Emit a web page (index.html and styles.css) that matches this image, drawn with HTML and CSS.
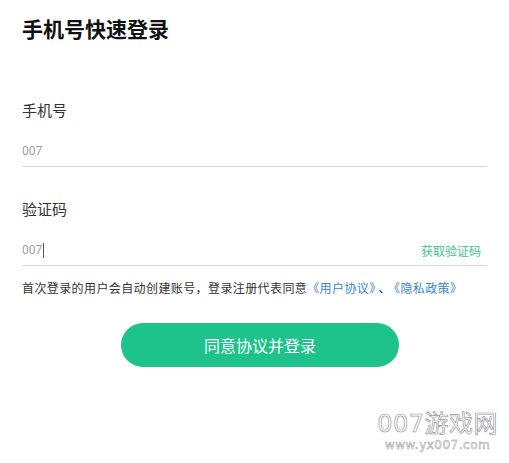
FILE: index.html
```html
<!DOCTYPE html>
<html lang="zh">
<head>
<meta charset="utf-8">
<link rel="stylesheet" href="styles.css">
</head>
<body>
<div class="page">
  <h1 class="title">手机号快速登录</h1>
  <div class="field field-phone">
    <div class="label">手机号</div>
    <div class="input-row"><span class="value">007</span></div>
  </div>
  <div class="field field-code">
    <div class="label">验证码</div>
    <div class="input-row"><span class="value">007<span class="caret"></span></span><span class="get-code">获取验证码</span></div>
  </div>
  <p class="agree">首次登录的用户会自动创建账号，登录注册代表同意<span class="link">《用户协议》</span><span class="sep">、</span><span class="link">《隐私政策》</span></p>
  <div class="btn-wrap"><button class="btn">同意协议并登录</button></div>
  <div class="watermark">
    <div class="wm-big">007游戏网</div>
    <div class="wm-small">www.yx007.com</div>
  </div>
</div>
</body>
</html>
```
FILE: styles.css
```css
html, body { margin: 0; padding: 0; background: #fff; }
body { font-family: "Noto Sans CJK SC", "Noto Sans", sans-serif; color: #222; }
.page { position: relative; width: 509px; height: 463px; padding: 0 22px; box-sizing: border-box; overflow: hidden; }
.title { margin: 0; padding-top: 14px; font-size: 21px; line-height: 29px; font-weight: 700; color: #111; }
.field { width: 465px; }
.field-phone { margin-top: 56px; }
.field-code { margin-top: 31px; }
.label { font-size: 15px; line-height: 22px; color: #333; }
.input-row { display: flex; justify-content: space-between; align-items: center; margin-top: 20px; height: 20px; border-bottom: 1px solid #d9d9d9; padding-bottom: 5px; }
.value { font-family: "Roboto", "Noto Sans", sans-serif; font-size: 12px; color: #a0a0a0; display: flex; align-items: center; }
.caret { display: inline-block; width: 1px; height: 15px; background: #555; margin-left: 1px; }
.get-code { font-size: 12px; color: #3cc48f; margin-right: 6px; }
.agree { margin: 13px 0 0; font-size: 12px; line-height: 18px; color: #333; letter-spacing: 0.4px; white-space: nowrap; }
.link { color: #3a86c9; }
.sep { margin: 0 3px; }
.btn-wrap { display: flex; justify-content: center; margin-top: 26px; width: 476px; }
.btn { width: 278px; height: 44px; border: none; border-radius: 22px; background: #1ec28b; color: #fff; font-family: "Noto Sans CJK SC", sans-serif; font-size: 16px; padding: 0; }
.watermark { position: absolute; right: 11px; bottom: 11px; text-align: center; color: #fff; -webkit-text-stroke: 0.7px #9a9a9a; font-family: "DejaVu Sans", "Noto Sans CJK SC", sans-serif; }
.wm-big { font-size: 24px; line-height: 28px; letter-spacing: 0.5px; }
.wm-small { font-size: 12px; line-height: 14px; -webkit-text-stroke: 0.5px #9a9a9a; letter-spacing: 0.5px; }
```
